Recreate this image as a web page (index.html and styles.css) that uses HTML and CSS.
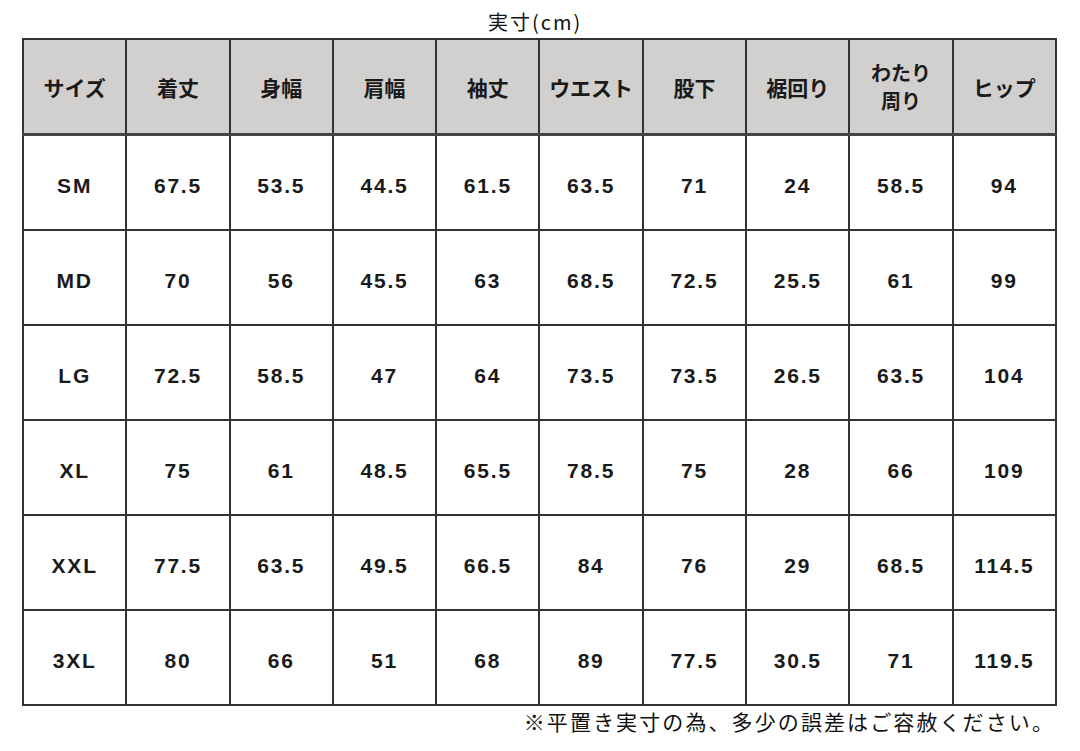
FILE: index.html
```
<!DOCTYPE html>
<html lang="ja">
<head>
<meta charset="utf-8">
<link rel="stylesheet" href="styles.css">
</head>
<body>
<div class="page">
  <div class="title">実寸(cm)</div>
  <table class="size-table">
    <thead>
      <tr>
        <th>サイズ</th><th>着丈</th><th>身幅</th><th>肩幅</th><th>袖丈</th><th>ウエスト</th><th>股下</th><th>裾回り</th><th class="two"><span class="ln">わたり</span><span class="ln">周り</span></th><th>ヒップ</th>
      </tr>
    </thead>
    <tbody>
      <tr><td>SM</td><td>67.5</td><td>53.5</td><td>44.5</td><td>61.5</td><td>63.5</td><td>71</td><td>24</td><td>58.5</td><td>94</td></tr>
      <tr><td>MD</td><td>70</td><td>56</td><td>45.5</td><td>63</td><td>68.5</td><td>72.5</td><td>25.5</td><td>61</td><td>99</td></tr>
      <tr><td>LG</td><td>72.5</td><td>58.5</td><td>47</td><td>64</td><td>73.5</td><td>73.5</td><td>26.5</td><td>63.5</td><td>104</td></tr>
      <tr><td>XL</td><td>75</td><td>61</td><td>48.5</td><td>65.5</td><td>78.5</td><td>75</td><td>28</td><td>66</td><td>109</td></tr>
      <tr><td>XXL</td><td>77.5</td><td>63.5</td><td>49.5</td><td>66.5</td><td>84</td><td>76</td><td>29</td><td>68.5</td><td>114.5</td></tr>
      <tr><td>3XL</td><td>80</td><td>66</td><td>51</td><td>68</td><td>89</td><td>77.5</td><td>30.5</td><td>71</td><td>119.5</td></tr>
    </tbody>
  </table>
  <div class="note">※平置き実寸の為、多少の誤差はご容赦ください。</div>
</div>
</body>
</html>
```
FILE: styles.css
```
html, body {
  margin: 0;
  padding: 0;
  background: #ffffff;
}
.page {
  width: 1080px;
  height: 751px;
  font-family: "Liberation Sans", "Noto Sans CJK JP", sans-serif;
  color: #111;
}
.title {
  height: 38px;
  box-sizing: border-box;
  padding-top: 9px;
  padding-left: 488px;
  font-family: "Noto Sans CJK JP", sans-serif;
  font-size: 20px;
  line-height: 26px;
  letter-spacing: 2px;
  color: #111;
}
.size-table {
  margin-left: 22px;
  width: 1035px;
  border-collapse: collapse;
  table-layout: fixed;
}
.size-table th,
.size-table td {
  border: 2px solid #333;
  text-align: center;
  vertical-align: middle;
  padding: 0;
}
.size-table th {
  height: 93px;
  background: #d1d0ce;
  font-family: "Noto Sans CJK JP", sans-serif;
  font-weight: 700;
  font-size: 21px;
  line-height: 26px;
  color: #1a1a1a;
}
.size-table th .ln {
  display: block;
  font-size: 20px;
  line-height: 28px;
}
.size-table thead tr th {
  border-bottom: 3px solid #444;
}
.size-table td {
  height: 87px;
  padding-top: 6px;
  font-family: "Liberation Sans", sans-serif;
  font-weight: 700;
  font-size: 21px;
  letter-spacing: 1.8px;
  color: #1a1a1a;
}
.note {
  width: 1055px;
  text-align: right;
  font-family: "Noto Sans CJK JP", sans-serif;
  font-size: 21px;
  line-height: 30px;
  letter-spacing: 2.1px;
  color: #111;
}
```
